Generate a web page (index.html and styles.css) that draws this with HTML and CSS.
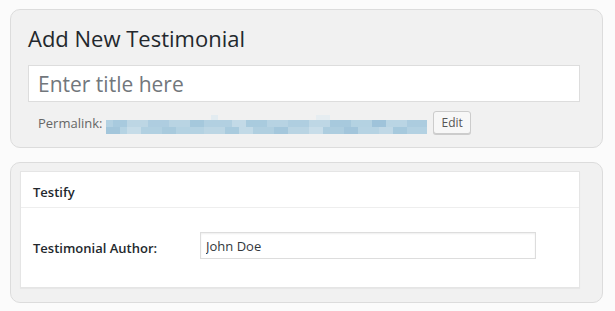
FILE: index.html
```html
<!DOCTYPE html>
<html lang="en">
<head>
  <meta charset="UTF-8">
  <title>Add New Testimonial</title>
  <link rel="stylesheet" href="styles.css">
</head>
<body>
  <div class="panel title-panel">
    <h1 class="page-title">Add New Testimonial</h1>
    <input class="title-input" type="text" placeholder="Enter title here">
    <div class="permalink">
      <span class="permalink-label">Permalink:</span>
      <span class="permalink-url"></span>
      <button class="edit-btn">Edit</button>
    </div>
  </div>

  <div class="panel meta-panel">
    <div class="postbox">
      <h2 class="postbox-title">Testify</h2>
      <div class="postbox-body">
        <label class="field-label" for="author">Testimonial Author:</label>
        <input class="field-input" id="author" type="text" value="John Doe">
      </div>
    </div>
  </div>
</body>
</html>
```

FILE: styles.css
```css
* {
  margin: 0;
  padding: 0;
  box-sizing: border-box;
}

body {
  font-family: 'Open Sans', 'Noto Sans', sans-serif;
  background: #fbfbfb;
  color: #23282d;
  padding: 9px 12px 0 10px;
}

.panel {
  background: #f1f1f1;
  border: 1px solid #dcdcdc;
  border-radius: 10px;
}

.title-panel {
  height: 139px;
  padding: 13px 22px 0 17px;
}

.page-title {
  font-size: 22px;
  font-weight: 400;
  line-height: 30px;
  margin-bottom: 12px;
}

.title-input {
  display: block;
  width: 100%;
  height: 37px;
  border: 1px solid #ddd;
  background: #fff;
  padding: 0 9px;
  font-family: inherit;
  font-size: 21px;
  color: #32373c;
  outline: none;
}

.title-input::placeholder {
  color: #72777c;
}

.permalink {
  display: flex;
  align-items: center;
  height: 23px;
  margin-top: 9px;
  padding-left: 10px;
  font-size: 13px;
}

.permalink-label {
  color: #666;
  margin-right: 4px;
}

.permalink-url {
  width: 321px;
  height: 19px;
  margin-top: 4px;
  background:
    linear-gradient(90deg, #a3c6db 0 14px, #b5d3e3 14px 21px, #c6dce8 21px 35px, #b1d0e1 35px 56px, #a8cadd 56px 70px, #b4d2e2 70px 98px, #bcd6e4 98px 119px, #a9cbde 119px 133px, #c2dae7 133px 147px, #b0cfe0 147px 168px, #a4c7dc 168px 182px, #b9d4e3 182px 203px, #c8dde9 203px 217px, #adcddf 217px 238px, #a2c5db 238px 252px, #b6d3e3 252px 273px, #c0d8e6 273px 287px, #a6c9dd 287px 301px, #b3d1e2 301px 321px) 0 12px / 321px 7px no-repeat,
    linear-gradient(90deg, #b3d1e2 0 7px, #a8cade 7px 21px, #bdd6e4 21px 42px, #aecde0 42px 63px, #b9d4e3 63px 84px, #a5c8dc 84px 98px, #b2d0e1 98px 126px, #c3dae7 126px 140px, #a9cbde 140px 161px, #b7d3e3 161px 182px, #afcee0 182px 203px, #bed7e5 203px 224px, #a7c9dd 224px 245px, #b4d2e2 245px 266px, #9fc3da 266px 280px, #bad5e4 280px 301px, #acccdf 301px 321px) 0 5px / 321px 7px no-repeat,
    linear-gradient(90deg, transparent 0 105px, #e3ecf1 105px 112px, transparent 112px 210px, #e6edf1 210px 224px, transparent 224px) 0 0 / 321px 5px no-repeat;
}

.edit-btn {
  margin-left: 6px;
  height: 23px;
  padding: 0 7px;
  border: 1px solid #ccc;
  border-radius: 3px;
  background: #f7f7f7;
  box-shadow: 0 1px 0 #ccc;
  font-family: inherit;
  font-size: 12px;
  color: #555;
}

.meta-panel {
  margin-top: 14px;
  height: 141px;
  padding: 8px 22px 0 9px;
}

.postbox {
  background: #fff;
  border: 1px solid #e5e5e5;
  box-shadow: 0 1px 1px rgba(0, 0, 0, 0.04);
  height: 117px;
}

.postbox-title {
  height: 36px;
  border-bottom: 1px solid #eee;
  padding: 5px 12px 0;
  font-size: 13px;
  font-weight: 600;
  line-height: 30px;
}

.postbox-body {
  display: flex;
  align-items: center;
  padding: 24px 12px 0 12px;
}

.field-label {
  width: 167px;
  padding-top: 5px;
  font-size: 13px;
  font-weight: 600;
}

.field-input {
  width: 336px;
  height: 27px;
  border: 1px solid #ddd;
  box-shadow: inset 0 1px 2px rgba(0, 0, 0, 0.07);
  padding: 0 5px;
  font-family: inherit;
  font-size: 13px;
  color: #32373c;
  outline: none;
}
```
